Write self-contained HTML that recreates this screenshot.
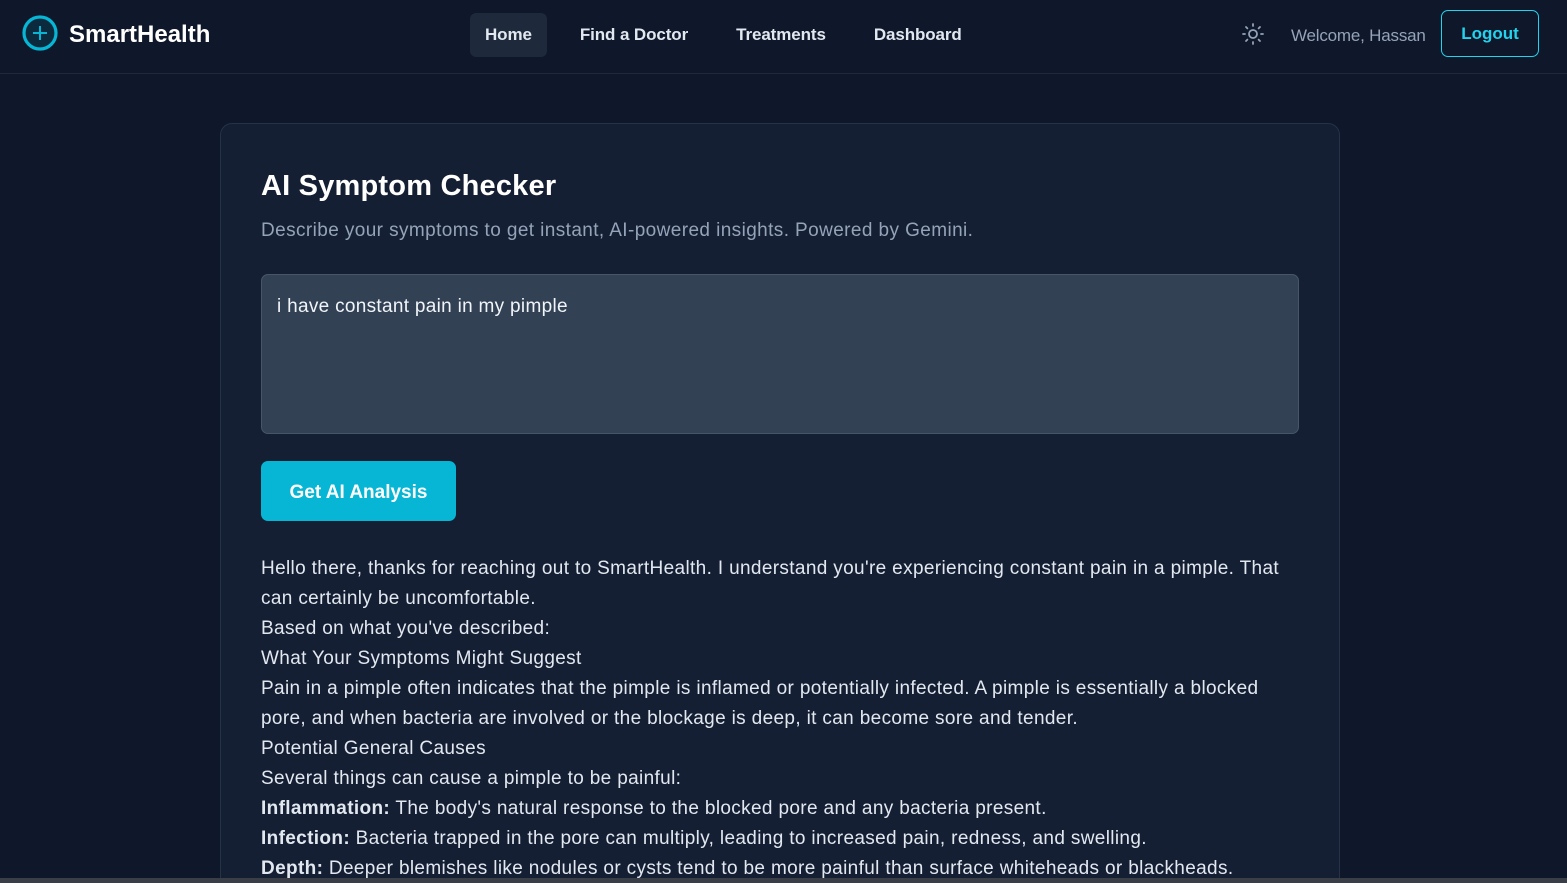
<!DOCTYPE html>
<html><head><style>
*{box-sizing:border-box;margin:0;padding:0}
html,body{width:1567px;height:883px;overflow:hidden}
body{background:#0f172a;font-family:"Liberation Sans",sans-serif;color:#e2e8f0;position:relative}
.nav{height:74px;border-bottom:1px solid #1e293b;position:relative}
.logo{position:absolute;left:22px;top:15px;display:flex;align-items:center}
.logo span{font-size:24px;font-weight:bold;color:#fff;margin-left:11px;margin-top:4px}
.links{position:absolute;left:470px;top:13px;display:flex}
.links a{color:#e2e8f0;font-size:17px;font-weight:bold;padding:12px 15px;border-radius:6px;margin-right:18px;text-decoration:none;letter-spacing:-0.1px}
.links a.act{background:#1e293b;}
.welcome{position:absolute;left:1291px;top:26px;font-size:17px;color:#94a3b8;letter-spacing:-0.2px}
.logout{position:absolute;left:1441px;top:10px;width:98px;height:47px;border:1.5px solid #22d3ee;border-radius:7px;color:#22d3ee;font-weight:bold;font-size:17px;display:flex;align-items:center;justify-content:center}
.card{position:absolute;left:220px;top:123px;width:1120px;height:800px;background:#151f33;border:1px solid #253247;border-radius:12px}
h1{position:absolute;left:40px;top:46px;font-size:29px;color:#fff;letter-spacing:0.2px}
.sub{position:absolute;left:40px;top:96px;font-size:19px;color:#94a3b8;letter-spacing:0.4px}
.ta{position:absolute;left:40px;top:150px;width:1038px;height:160px;background:#334155;border:1px solid #475569;border-radius:7px;padding:21px 15px;font-size:19px;color:#f1f5f9;letter-spacing:0.3px}
.btn{position:absolute;left:40px;top:337px;width:195px;height:60px;background:#06b6d4;border-radius:7px;color:#fff;font-weight:bold;font-size:19px;display:flex;align-items:center;justify-content:center;padding-top:3px}
.out{position:absolute;left:40px;top:430px;width:1040px;font-size:19px;line-height:30px;color:#e2e8f0;letter-spacing:0.35px}
.bar{position:absolute;left:0;top:878px;width:1567px;height:5px;background:#3a3f47}
</style></head><body>
<div class="nav">
<div class="logo"><svg width="36" height="36" viewBox="0 0 36 36"><circle cx="18" cy="18" r="16" fill="#0c2a3d" stroke="#06b6d4" stroke-width="3.2"/><path d="M18 11v14M11 18h14" stroke="#06b6d4" stroke-width="2"/></svg><span>SmartHealth</span></div>
<div class="links"><a class="act">Home</a><a>Find a Doctor</a><a>Treatments</a><a>Dashboard</a></div>
<svg style="position:absolute;left:1242px;top:23px" width="22" height="22" viewBox="0 0 22 22" fill="none" stroke="#94a3b8" stroke-width="1.8" stroke-linecap="round"><circle cx="11" cy="11" r="4"/><path d="M11 1v2M11 19v2M1 11h2M19 11h2M4 4l1.4 1.4M16.6 16.6L18 18M4 18l1.4-1.4M16.6 5.4L18 4"/></svg>
<div class="welcome">Welcome, Hassan</div>
<div class="logout">Logout</div>
</div>
<div class="card">
<h1>AI Symptom Checker</h1>
<div class="sub">Describe your symptoms to get instant, AI-powered insights. Powered by Gemini.</div>
<div class="ta">i have constant pain in my pimple</div>
<div class="btn">Get AI Analysis</div>
<div class="out">Hello there, thanks for reaching out to SmartHealth. I understand you're experiencing constant pain in a pimple. That can certainly be uncomfortable.<br>Based on what you've described:<br>What Your Symptoms Might Suggest<br>Pain in a pimple often indicates that the pimple is inflamed or potentially infected. A pimple is essentially a blocked pore, and when bacteria are involved or the blockage is deep, it can become sore and tender.<br>Potential General Causes<br>Several things can cause a pimple to be painful:<br><b>Inflammation:</b> The body's natural response to the blocked pore and any bacteria present.<br><b>Infection:</b> Bacteria trapped in the pore can multiply, leading to increased pain, redness, and swelling.<br><b>Depth:</b> Deeper blemishes like nodules or cysts tend to be more painful than surface whiteheads or blackheads.</div>
</div>
<div class="bar"></div>
</body></html>
